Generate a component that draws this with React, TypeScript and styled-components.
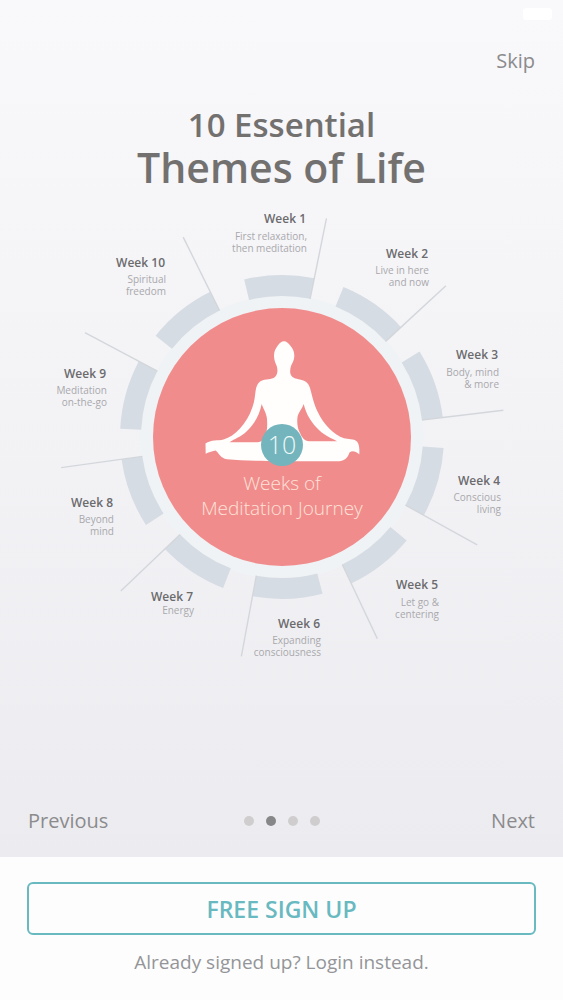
import React from "react";
import styled, { createGlobalStyle } from "styled-components";

const GlobalStyle = createGlobalStyle`
  * { box-sizing: border-box; }
  body { margin: 0; background: #fdfdfe; }
  button { font: inherit; cursor: pointer; }
`;

const Screen = styled.div`
  display: flex;
  flex-direction: column;
  min-height: 100vh;
  font-family: "Open Sans", sans-serif;
  color: #8b8b8f;
`;

const Slide = styled.main`
  display: flex;
  flex-direction: column;
  flex: 1;
  background: linear-gradient(#f9f8fb 0%, #f4f4f7 40%, #ececf0 100%);
`;

const StatusBar = styled.div`
  display: flex;
  align-items: center;
  justify-content: flex-end;
  height: 28px;
  padding: 0 11px;
`;

const Battery = styled.span`
  width: 29px;
  height: 12px;
  border-radius: 3px;
  background: #ffffff;
`;

const TopBar = styled.div`
  display: flex;
  justify-content: flex-end;
  padding: 17px 28px 0;
`;

const TextButton = styled.button`
  padding: 0;
  border: 0;
  background: none;
  color: #8b8b8d;
  font-size: 20px;
  line-height: 32px;
`;

const Heading = styled.h1`
  margin: 27px 0 0;
  color: #73716f;
  font-weight: 600;
  text-align: center;
`;

const HeadingLine = styled.span<{ $size: number }>`
  display: block;
  font-size: ${({ $size }) => $size}px;
  line-height: 42px;
`;

const Wheel = styled.svg`
  display: block;
  width: 100%;
  max-width: 563px;
  margin: 12px auto 0;
`;

const WeekName = styled.text`
  fill: #6b6a6d;
  font-size: 12px;
  font-weight: 600;
  text-anchor: end;
`;

const WeekNote = styled.text`
  fill: #a9a8ac;
  font-size: 10px;
  text-anchor: end;
`;

const Caption = styled.text<{ $size: number; $color: string }>`
  fill: ${({ $color }) => $color};
  font-size: ${({ $size }) => $size}px;
  font-weight: 300;
  text-anchor: middle;
`;

const Pager = styled.nav`
  display: grid;
  grid-template-columns: 1fr auto 1fr;
  align-items: center;
  margin-top: auto;
  padding: 0 28px 20px;
`;

const PagerButton = styled(TextButton)<{ $side: "start" | "end" }>`
  justify-self: ${({ $side }) => $side};
`;

const Dots = styled.div`
  display: flex;
  gap: 12px;
`;

const Dot = styled.span<{ $active?: boolean }>`
  width: 10px;
  height: 10px;
  border-radius: 50%;
  background: ${({ $active }) => ($active ? "#878688" : "#cfcdce")};
`;

const Footer = styled.footer`
  display: flex;
  flex-direction: column;
  align-items: center;
  gap: 12px;
  padding: 25px 27px 23px;
  background: #fdfdfe;
`;

const SignUp = styled.button`
  width: 100%;
  height: 53px;
  padding: 0;
  border: 2px solid #69b9c1;
  border-radius: 6px;
  background: transparent;
  color: #69b9c1;
  font-size: 23px;
  font-weight: 600;
`;

const Login = styled.a`
  color: #949598;
  font-size: 19px;
  line-height: 30px;
  text-decoration: none;
`;

const CENTER = { x: 282, y: 237 };
const RING_INNER = 141;
const RING_OUTER = 162;
const SPOKE = 223;

const weeks = [
  { name: "Week 1", notes: ["First relaxation,", "then meditation"], x: 306, y: 23, gap: 17 },
  { name: "Week 2", notes: ["Live in here", "and now"], x: 428, y: 58, gap: 16 },
  { name: "Week 3", notes: ["Body, mind", "& more"], x: 498, y: 159, gap: 17 },
  { name: "Week 4", notes: ["Conscious", "living"], x: 500, y: 285, gap: 16 },
  { name: "Week 5", notes: ["Let go &", "centering"], x: 438, y: 389, gap: 17 },
  { name: "Week 6", notes: ["Expanding", "consciousness"], x: 320, y: 428, gap: 16 },
  { name: "Week 7", notes: ["Energy"], x: 193, y: 401, gap: 13 },
  { name: "Week 8", notes: ["Beyond", "mind"], x: 113, y: 307, gap: 16 },
  { name: "Week 9", notes: ["Meditation", "on-the-go"], x: 106, y: 178, gap: 16 },
  { name: "Week 10", notes: ["Spiritual", "freedom"], x: 165, y: 67, gap: 16 },
];

const point = (radius: number, degrees: number) => {
  const a = (degrees * Math.PI) / 180;
  return `${(CENTER.x + radius * Math.sin(a)).toFixed(2)} ${(CENTER.y - radius * Math.cos(a)).toFixed(2)}`;
};

const segment = (end: number) => {
  const start = end - 25;
  return `M${point(RING_OUTER, start)}A${RING_OUTER} ${RING_OUTER} 0 0 1 ${point(RING_OUTER, end)}L${point(RING_INNER, end)}A${RING_INNER} ${RING_INNER} 0 0 0 ${point(RING_INNER, start)}Z`;
};

const Meditator = () => (
  <path
    fill="#fffefd"
    fillRule="evenodd"
    d="M284 141.3C281.500 141.300 279.500 143 278 145.300C275.500 148.500 274 151.500 274 156C274 160 275.500 163 276.700 166C277.800 169.500 278 174 275 177C271.500 179.800 265.500 178.800 261 181C257.500 183 256.500 186 255.600 191C254.700 197 254.700 201 252.500 207C249.500 216 245 223 240 228.500C235 234 229.500 237.700 223.500 239.500C218 241 211 239.500 205.500 243.500L205.700 253.700C209.500 251.500 212.500 251.500 215.700 250.500C218.500 252.500 220.500 258.500 227 259.300C243 261 262 260.500 283 261.300H336C344.500 261.500 347.500 258 349.500 252.500C352.500 250.200 355.500 251.500 359.300 254.300C359.500 249 359.500 245 357 241.500C353.500 238.500 348 239.500 344 238.300C334 235 323.500 224.500 317.500 211.500C313.500 203 312.500 197 310.800 191C309.700 186 308 183 305 181.300C300.500 179 296 179.500 292.500 177C289.500 174.500 289.800 170 291 166C292.500 162.500 294.300 160.500 294.300 155.500C294.300 151.500 292.500 148 290 145.300C288.300 143 286.500 141.300 284 141.300ZM261.700 204C263.500 209.500 266.500 213 267 219C267.400 226 267.500 232.500 264 237.500C262.500 240.500 261 242 258 242.300H229.500C235 238.700 240.500 237 246.500 231.500C254.500 224 259.500 215 261.700 204ZM303.700 204C306 214.500 312 223.500 319.500 230.500C325.500 236 331.500 238 337 241.300H309C304.500 241 302 237.500 300 233C297.500 229 296.800 222 297.500 217C298.500 212 301.700 209.500 303.700 204Z"
  />
);

export default function App() {
  return (
    <Screen>
      <GlobalStyle />
      <Slide>
        <StatusBar>
          <Battery />
        </StatusBar>
        <TopBar>
          <TextButton type="button">Skip</TextButton>
        </TopBar>
        <Heading>
          <HeadingLine $size={33}>10 Essential</HeadingLine>
          <HeadingLine $size={41}>Themes of Life</HeadingLine>
        </Heading>
        <Wheel viewBox="0 0 563 460" role="img" aria-label="10 Weeks of Meditation Journey">
          <circle cx={CENTER.x} cy={CENTER.y} r={142} fill="#f0f3f5" />
          {weeks.map((week, i) => {
            const end = 11.5 + i * 35.8;
            return (
              <g key={week.name}>
                <path d={segment(end)} fill="#d6dce4" />
                <path d={`M${point(RING_INNER, end)}L${point(SPOKE, end)}`} stroke="#d3d7db" strokeWidth="1.4" />
                <WeekName x={week.x} y={week.y}>{week.name}</WeekName>
                {week.notes.map((note, n) => (
                  <WeekNote key={note} x={week.x + 1} y={week.y + week.gap + n * 12}>{note}</WeekNote>
                ))}
              </g>
            );
          })}
          <circle cx={CENTER.x} cy={CENTER.y} r={129} fill="#f18c8d" />
          <Meditator />
          <circle cx={282} cy={245} r={21} fill="#74b4bc" />
          <Caption x={282} y={254} $size={25} $color="#eef8f8">10</Caption>
          <Caption x={282} y={290} $size={19} $color="#fde3d8">Weeks of</Caption>
          <Caption x={282} y={315} $size={19} $color="#fde3d8">Meditation Journey</Caption>
        </Wheel>
        <Pager aria-label="Slides">
          <PagerButton type="button" $side="start">Previous</PagerButton>
          <Dots>
            <Dot />
            <Dot $active />
            <Dot />
            <Dot />
          </Dots>
          <PagerButton type="button" $side="end">Next</PagerButton>
        </Pager>
      </Slide>
      <Footer>
        <SignUp type="button">FREE SIGN UP</SignUp>
        <Login href="#login">Already signed up? Login instead.</Login>
      </Footer>
    </Screen>
  );
}
